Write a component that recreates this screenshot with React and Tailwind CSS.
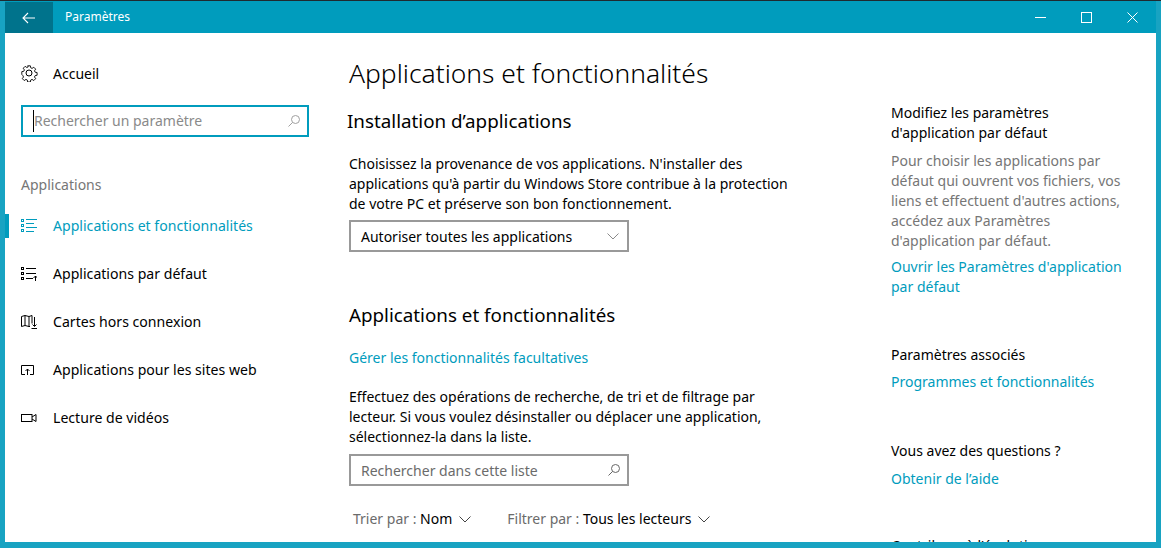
const font = { fontFamily: '"Noto Sans", sans-serif' };

const GearIcon = () => (
    <svg width="18" height="18" viewBox="0 0 18 18" fill="none" stroke="currentColor" strokeWidth="1">
        <circle cx="9" cy="9" r="3" />
        <path d="M7.5 1h3l.4 2.2 1.5.7 1.9-1.3 2.1 2.1-1.3 1.9.7 1.5 2.2.4v3l-2.2.4-.7 1.5 1.3 1.9-2.1 2.1-1.9-1.3-1.5.7-.4 2.2h-3l-.4-2.2-1.5-.7-1.9 1.3-2.1-2.1 1.3-1.9-.7-1.5L1 10.5v-3l2.2-.4.7-1.5-1.3-1.9 2.1-2.1 1.9 1.3 1.5-.7z" transform="translate(0.9 0.9) scale(0.9)" />
    </svg>
);

const SearchIcon = ({ className }) => (
    <svg width="12" height="12" viewBox="0 0 12 12" fill="none" stroke="currentColor" strokeWidth="1" className={className}>
        <circle cx="7.5" cy="4.5" r="4" />
        <path d="M4.6 7.4L0.5 11.5" />
    </svg>
);

const Chevron = ({ className }) => (
    <svg width="12" height="7" viewBox="0 0 12 7" fill="none" stroke="currentColor" strokeWidth="1" className={className}>
        <path d="M0.5 0.5L6 6L11.5 0.5" />
    </svg>
);

const ListIcon = () => (
    <svg width="16" height="16" viewBox="0 0 16 16" fill="none" stroke="currentColor" strokeWidth="1">
        <rect x="0.5" y="1.5" width="2" height="2" />
        <rect x="0.5" y="6.5" width="2" height="2" />
        <rect x="0.5" y="11.5" width="2" height="2" />
        <path d="M5 1.5h11M5 5.5h8M5 9.5h11M5 13.5h8" />
    </svg>
);

const DefaultIcon = () => (
    <svg width="16" height="16" viewBox="0 0 16 16" fill="none" stroke="currentColor" strokeWidth="1">
        <rect x="0.5" y="1.5" width="2" height="2" />
        <rect x="0.5" y="6.5" width="2" height="2" />
        <rect x="0.5" y="11.5" width="2" height="2" />
        <path d="M5 2.5h10M5 7.5h10M5 12.5h7M14.5 15v-5M12.5 12l2-2 2 2" />
    </svg>
);

const MapIcon = () => (
    <svg width="16" height="16" viewBox="0 0 16 16" fill="none" stroke="currentColor" strokeWidth="1">
        <path d="M0.5 2.5l3.5-1 4 1 3-1v8M0.5 2.5v10l3.5-1 4 1h1M4 1.5v10M8 2.5v10M13.5 3v9M11.5 10.5l2 2 2-2M10.5 14.5h5.5" />
    </svg>
);

const WebIcon = () => (
    <svg width="14" height="12" viewBox="0 0 14 12" fill="none" stroke="currentColor" strokeWidth="1">
        <path d="M4 10.5H0.5v-9h12v9H9M6.5 11V5M4.5 7l2-2 2 2" />
    </svg>
);

const VideoIcon = () => (
    <svg width="16" height="10" viewBox="0 0 16 10" fill="none" stroke="currentColor" strokeWidth="1">
        <rect x="0.5" y="1.5" width="10.5" height="7" />
        <path d="M11 4l4-2.5v7L11 6" />
    </svg>
);

const navItems = [
    { label: "Applications et fonctionnalités", icon: <ListIcon />, active: true },
    { label: "Applications par défaut", icon: <DefaultIcon /> },
    { label: "Cartes hors connexion", icon: <MapIcon /> },
    { label: "Applications pour les sites web", icon: <WebIcon /> },
    { label: "Lecture de vidéos", icon: <VideoIcon /> },
];

const Sidebar = () => (
    <aside className="w-[344px] shrink-0 pt-[27px]">
        <div className="flex items-center h-[26px] pl-[15px] text-black">
            <GearIcon />
            <span className="ml-[15px] text-[14px]">Accueil</span>
        </div>
        <div className="mx-[16px] mt-[19px] w-[288px] h-[32px] border-[2px] border-[#009cbd] flex items-center justify-between pl-[10px] pr-[7px]">
            <span className="border-l border-black h-[22px] leading-[22px] text-[14px] text-[#8a8a8a]">Rechercher un paramètre</span>
            <SearchIcon className="text-[#a0a0a0]" />
        </div>
        <div className="pl-[16px] mt-[38px] text-[14px] leading-[20px] text-[#767676]">Applications</div>
        <nav className="mt-[7px]">
            {navItems.map((item) => (
                <div key={item.label} className={`flex items-center h-[48px] ${item.active ? "text-[#009cbd]" : "text-black"}`}>
                    <div className={`w-[4px] h-[24px] ${item.active ? "bg-[#009cbd]" : ""}`} />
                    <div className="w-[44px] pl-[12px] flex justify-start">{item.icon}</div>
                    <span className="text-[14.1px]">{item.label}</span>
                </div>
            ))}
        </nav>
    </aside>
);

const Main = () => (
    <main className="w-[542px] shrink-0 text-black">
        <h1 className="mt-[21px] text-[26.4px] leading-[38px] font-light">Applications et fonctionnalités</h1>
        <h2 className="mt-[15px] -ml-[2px] text-[18.8px] leading-[28px]">Installation d’applications</h2>
        <p className="mt-[19px] w-[450px] text-[14px] leading-[20px]">
            Choisissez la provenance de vos applications. N'installer des applications qu'à partir du Windows Store contribue à la protection de votre PC et préserve son bon fonctionnement.
        </p>
        <div className="mt-[6px] w-[280px] h-[32px] border-[2px] border-[#999999] flex items-center justify-between pl-[10px] pr-[8px]">
            <span className="text-[14px]">Autoriser toutes les applications</span>
            <Chevron className="text-[#8a8a8a]" />
        </div>
        <h2 className="mt-[49px] text-[18.8px] leading-[28px]">Applications et fonctionnalités</h2>
        <div className="mt-[19px] text-[14px] leading-[20px] text-[#009cbd]">Gérer les fonctionnalités facultatives</div>
        <p className="mt-[19px] w-[440px] text-[14px] leading-[20px]">
            Effectuez des opérations de recherche, de tri et de filtrage par lecteur. Si vous voulez désinstaller ou déplacer une application, sélectionnez-la dans la liste.
        </p>
        <div className="mt-[7px] w-[280px] h-[32px] border-[2px] border-[#999999] flex items-center justify-between pl-[10px] pr-[7px]">
            <span className="text-[14px] text-[#6b6b6b]">Rechercher dans cette liste</span>
            <SearchIcon className="text-[#666666]" />
        </div>
        <div className="mt-[23px] pl-[4px] flex items-center text-[14px] leading-[20px]">
            <span className="text-[#6b6b6b]">Trier par :&nbsp;</span>
            <span>Nom</span>
            <Chevron className="ml-[7px] text-[#444444]" />
            <span className="ml-[36px] text-[#6b6b6b]">Filtrer par :&nbsp;</span>
            <span>Tous les lecteurs</span>
            <Chevron className="ml-[7px] text-[#444444]" />
        </div>
    </main>
);

const Aside = () => (
    <section className="flex-1 pt-[70px] pr-[30px] text-[14px] leading-[20px]">
        <div className="text-black">Modifiez les paramètres d'application par défaut</div>
        <p className="mt-[8px] text-[#767676]">
            Pour choisir les applications par défaut qui ouvrent vos fichiers, vos liens et effectuent d'autres actions, accédez aux Paramètres d'application par défaut.
        </p>
        <div className="mt-[6px] text-[#009cbd]">Ouvrir les Paramètres d'application par défaut</div>
        <div className="mt-[48px] text-black">Paramètres associés</div>
        <div className="mt-[7px] text-[#009cbd]">Programmes et fonctionnalités</div>
        <div className="mt-[49px] text-black">Vous avez des questions ?</div>
        <div className="mt-[8px] text-[#009cbd]">Obtenir de l’aide</div>
        <div className="mt-[47px] text-black">Contribuer à l'évolution</div>
    </section>
);

const App = () => (
    <div style={font} className="w-[1161px] h-[548px] flex flex-col overflow-hidden bg-[#18a3c2]">
        <div className="h-[1px] bg-[#1f2a30] shrink-0" />
        <div className="h-[32px] shrink-0 mx-[5px] bg-[#009cbd] flex items-center text-white">
            <div className="w-[48px] h-full mt-[2px] bg-[#00738c] flex items-center justify-center">
                <svg width="14" height="12" viewBox="0 0 14 12" fill="none" stroke="currentColor" strokeWidth="1.1">
                    <path d="M13 6H1M6 1L1 6l5 5" />
                </svg>
            </div>
            <span className="ml-[12px] text-[12px]">Paramètres</span>
            <div className="ml-auto mr-[1px] flex items-center">
                <div className="w-[46px] flex justify-center">
                    <svg width="11" height="1" viewBox="0 0 11 1"><path d="M0 0.5h11" stroke="currentColor" /></svg>
                </div>
                <div className="w-[46px] flex justify-center">
                    <svg width="11" height="11" viewBox="0 0 11 11" fill="none" stroke="currentColor"><rect x="0.5" y="0.5" width="10" height="10" /></svg>
                </div>
                <div className="w-[46px] flex justify-center">
                    <svg width="11" height="11" viewBox="0 0 11 11" fill="none" stroke="currentColor"><path d="M0.5 0.5l10 10M10.5 0.5l-10 10" /></svg>
                </div>
            </div>
        </div>
        <div className="flex-1 min-h-0 mx-[5px] mb-[6px] bg-white flex overflow-hidden">
            <Sidebar />
            <Main />
            <Aside />
        </div>
    </div>
);

export default App;
